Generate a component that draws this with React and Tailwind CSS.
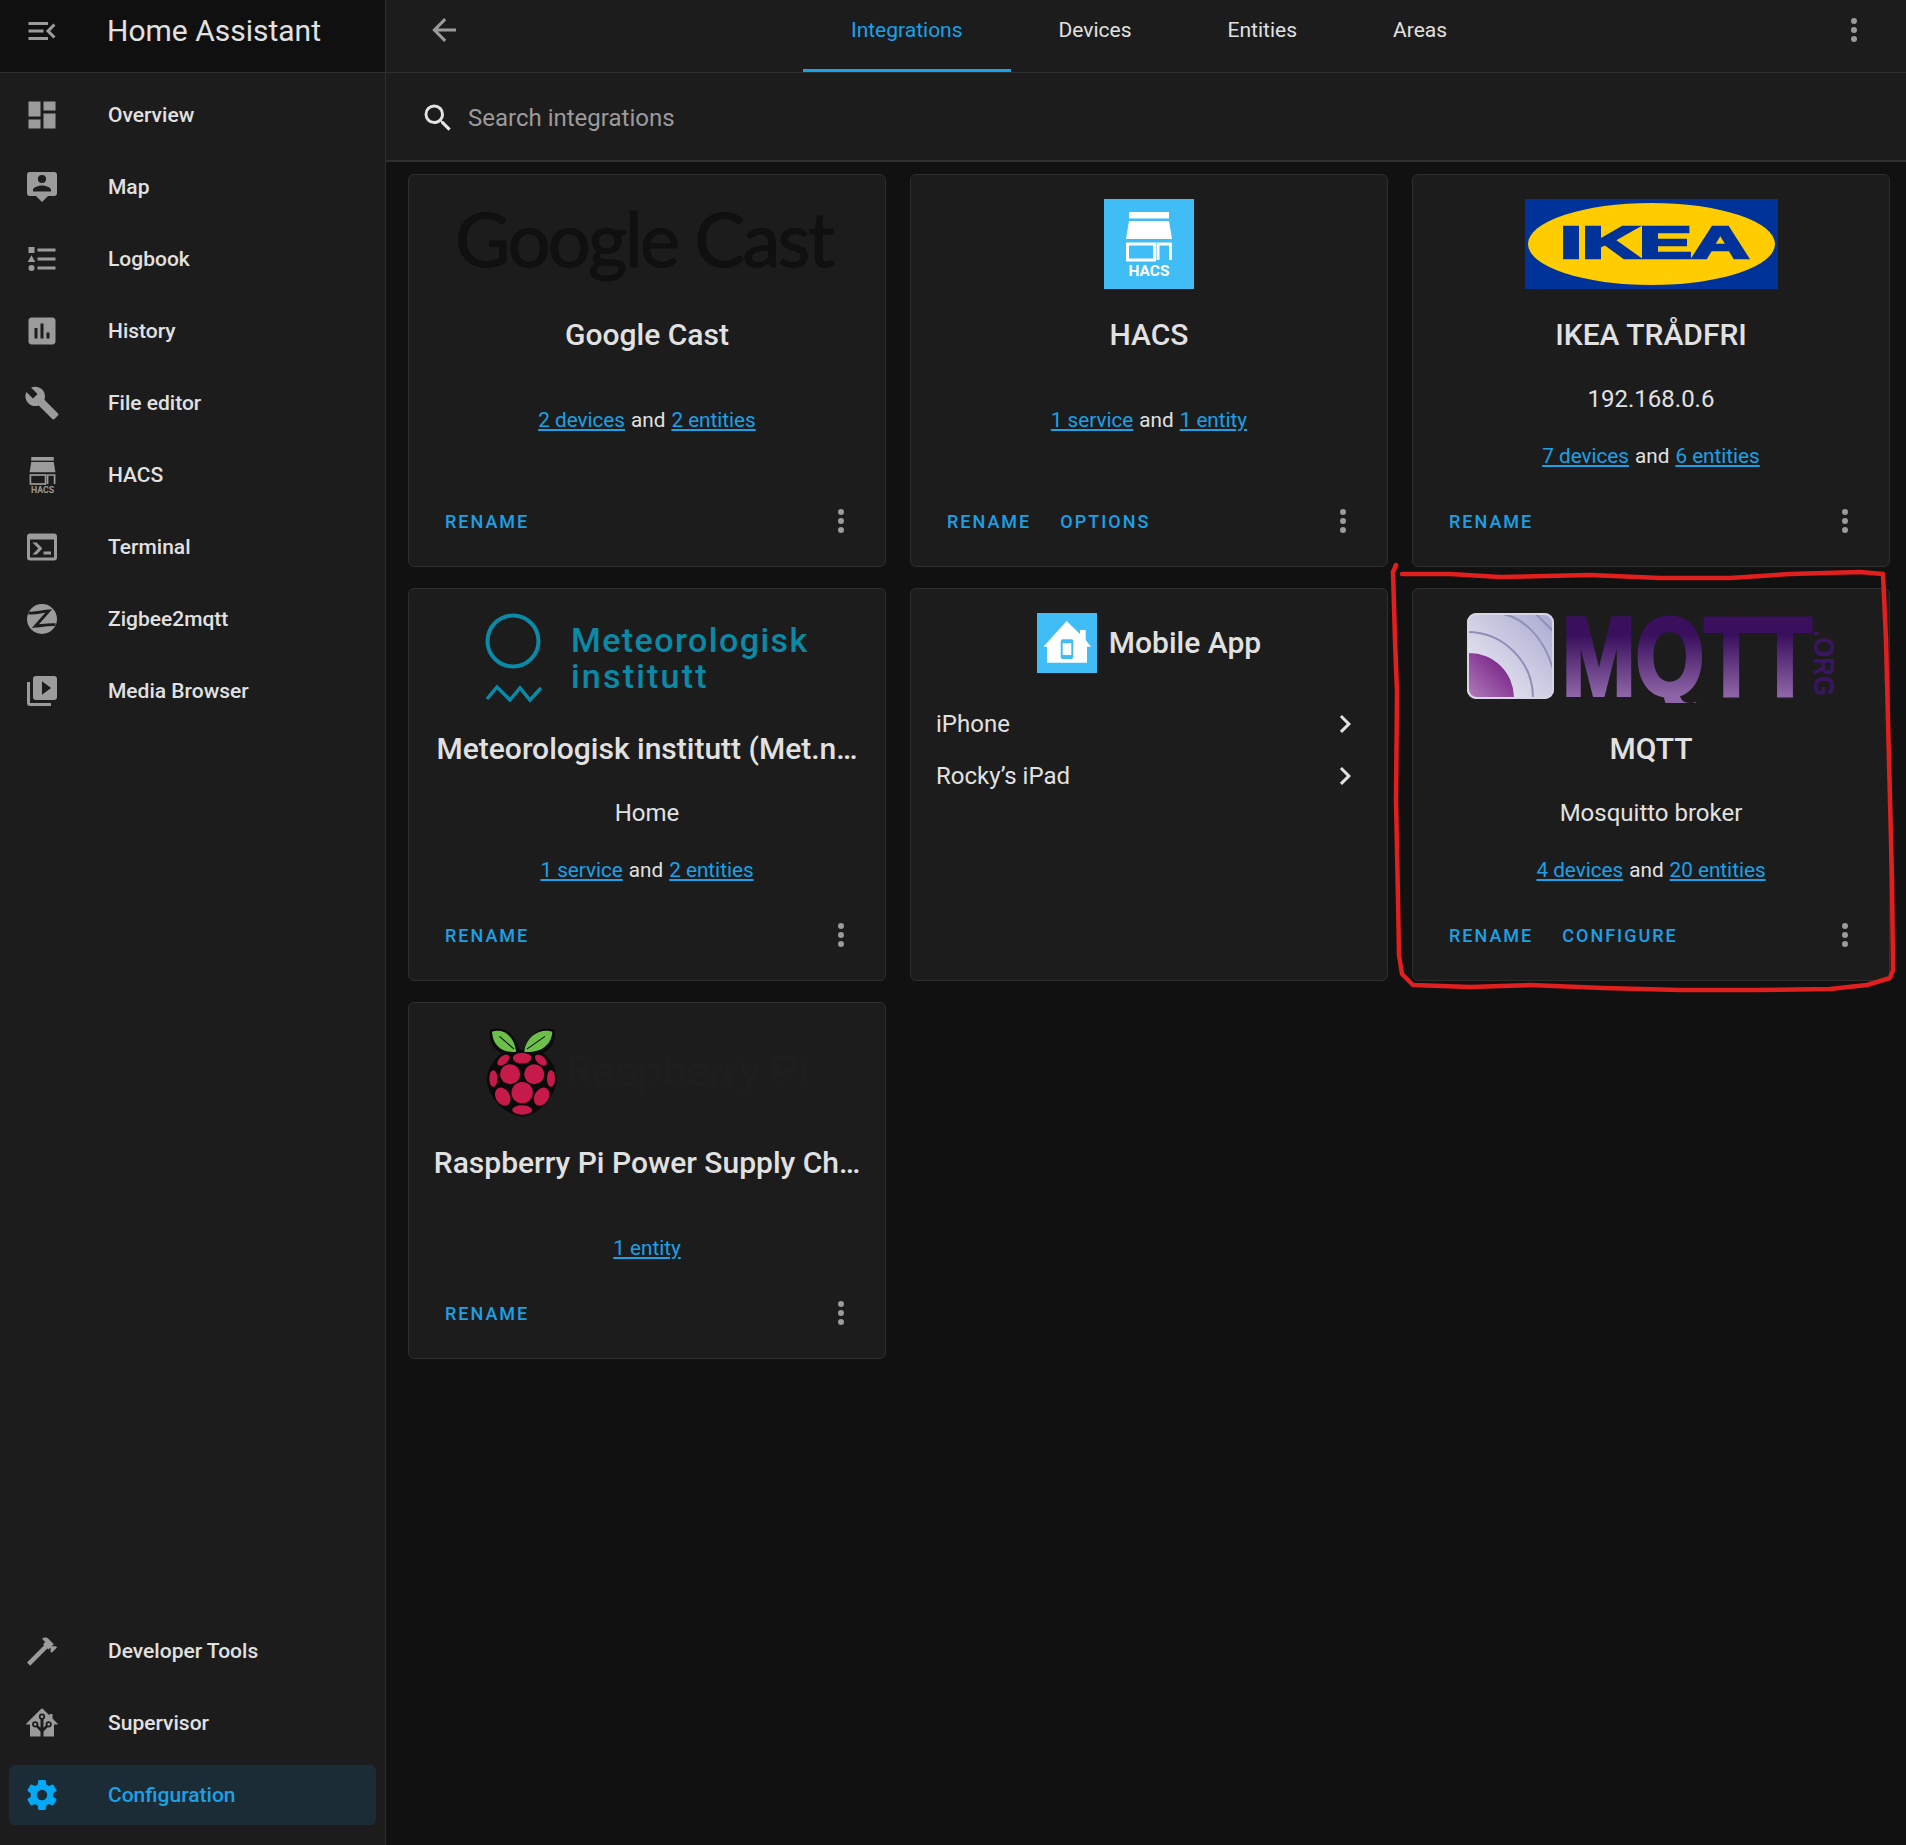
import React from 'react';

const mdi = {
  menuOpen: 'M21,15.61L19.59,17L14.58,12L19.59,7L21,8.39L17.44,12L21,15.61M3,6H16V8H3V6M3,13V11H13V13H3M3,18V16H16V18H3Z',
  dashboard: 'M13,3V9H21V3M13,21H21V11H13M3,21H11V15H3M3,13H11V3H3V13Z',
  map: 'M4,2H20A2,2 0 0,1 22,4V16A2,2 0 0,1 20,18H16L12,22L8,18H4A2,2 0 0,1 2,16V4A2,2 0 0,1 4,2M12,4A2.7,2.7 0 0,0 9.3,6.7A2.7,2.7 0 0,0 12,9.4A2.7,2.7 0 0,0 14.7,6.7A2.7,2.7 0 0,0 12,4M6,15H18V14C18,12 14,11 12,11C10,11 6,12 6,14V15Z',
  logbook: 'M5,9.5L7.5,14H2.5L5,9.5M3,4H7V8H3V4M5,20A2,2 0 0,0 7,18A2,2 0 0,0 5,16A2,2 0 0,0 3,18A2,2 0 0,0 5,20M9,5V7H21V5H9M9,19H21V17H9V19M9,13H21V11H9V13Z',
  history: 'M19 3H5C3.9 3 3 3.9 3 5V19C3 20.1 3.9 21 5 21H19C20.1 21 21 20.1 21 19V5C21 3.9 20.1 3 19 3M9 17H7V10H9V17M13 17H11V7H13V17M17 17H15V13H17V17Z',
  wrench: 'M22.7,19L13.6,9.9C14.5,7.6 14,4.9 12.1,3C10.1,1 7.1,0.6 4.7,1.7L9,6L6,9L1.6,4.7C0.4,7.1 0.9,10.1 2.9,12.1C4.8,14 7.5,14.5 9.8,13.6L18.9,22.7C19.3,23.1 19.9,23.1 20.3,22.7L22.6,20.4C23.1,20 23.1,19.3 22.7,19Z',
  console: 'M20,19V7H4V19H20M20,3A2,2 0 0,1 22,5V19A2,2 0 0,1 20,21H4A2,2 0 0,1 2,19V5C2,3.89 2.9,3 4,3H20M13,17V15H18V17H13M9.58,13L5.57,9H8.4L11.7,12.3C12.09,12.69 12.09,13.33 11.7,13.72L8.42,17H5.59L9.58,13Z',
  media: 'M4,6H2V20A2,2 0 0,0 4,22H18V20H4V6M20,2H8A2,2 0 0,0 6,4V16A2,2 0 0,0 8,18H20A2,2 0 0,0 22,16V4A2,2 0 0,0 20,2M12,14.5V5.5L18,10L12,14.5Z',
  hammer: 'M2 19.63L13.43 8.2L12.72 7.5L14.14 6.07L12 3.89C13.2 2.7 15.09 2.7 16.27 3.89L19.87 7.5L18.45 8.91H21.29L22 9.62L18.45 13.21L17.74 12.5V9.62L16.27 11.04L15.56 10.33L4.13 21.76L2 19.63Z',
  supervisor: 'M21.8,13H20V21H13V17.67L15.79,14.88L16.5,15C17.66,15 18.6,14.06 18.6,12.9C18.6,11.74 17.66,10.8 16.5,10.8A2.1,2.1 0 0,0 14.4,12.9L14.5,13.61L13,15.13V9.65C13.66,9.29 14.1,8.6 14.1,7.8A2.1,2.1 0 0,0 12,5.7A2.1,2.1 0 0,0 9.9,7.8C9.9,8.6 10.34,9.29 11,9.65V15.13L9.5,13.61L9.6,12.9A2.1,2.1 0 0,0 7.5,10.8A2.1,2.1 0 0,0 5.4,12.9A2.1,2.1 0 0,0 7.5,15L8.21,14.88L11,17.67V21H4V13H2.25C1.83,13 1.42,13 1.42,12.79C1.43,12.57 1.85,12.15 2.28,11.72L11,3C11.33,2.67 11.67,2.33 12,2.33C12.33,2.33 12.67,2.67 13,3L17,7V6H19V9L21.78,11.78C22.18,12.18 22.59,12.59 22.6,12.8C22.6,13 22.2,13 21.8,13M7.5,12A0.9,0.9 0 0,1 8.4,12.9A0.9,0.9 0 0,1 7.5,13.8A0.9,0.9 0 0,1 6.6,12.9A0.9,0.9 0 0,1 7.5,12M16.5,12C17,12 17.4,12.4 17.4,12.9C17.4,13.4 17,13.8 16.5,13.8A0.9,0.9 0 0,1 15.6,12.9A0.9,0.9 0 0,1 16.5,12M12,6.9C12.5,6.9 12.9,7.3 12.9,7.8C12.9,8.3 12.5,8.7 12,8.7C11.5,8.7 11.1,8.3 11.1,7.8C11.1,7.3 11.5,6.9 12,6.9Z',
  cog: 'M12,15.5A3.5,3.5 0 0,1 8.5,12A3.5,3.5 0 0,1 12,8.5A3.5,3.5 0 0,1 15.5,12A3.5,3.5 0 0,1 12,15.5M19.43,12.97C19.47,12.65 19.5,12.33 19.5,12C19.5,11.67 19.47,11.34 19.43,11L21.54,9.37C21.73,9.22 21.78,8.95 21.66,8.73L19.66,5.27C19.54,5.05 19.27,4.96 19.05,5.05L16.56,6.05C16.04,5.66 15.5,5.32 14.87,5.07L14.5,2.42C14.46,2.18 14.25,2 14,2H10C9.75,2 9.54,2.18 9.5,2.42L9.13,5.07C8.5,5.32 7.96,5.66 7.44,6.05L4.95,5.05C4.73,4.96 4.46,5.05 4.34,5.27L2.34,8.73C2.21,8.95 2.27,9.22 2.46,9.37L4.57,11C4.53,11.34 4.5,11.67 4.5,12C4.5,12.33 4.53,12.65 4.57,12.97L2.46,14.63C2.27,14.78 2.21,15.05 2.34,15.27L4.34,18.73C4.46,18.95 4.73,19.03 4.95,18.95L7.44,17.94C7.96,18.34 8.5,18.68 9.13,18.93L9.5,21.58C9.54,21.82 9.75,22 10,22H14C14.25,22 14.46,21.82 14.5,21.58L14.87,18.93C15.5,18.67 16.04,18.34 16.56,17.94L19.05,18.95C19.27,19.03 19.54,18.95 19.66,18.73L21.66,15.27C21.78,15.05 21.73,14.78 21.54,14.63L19.43,12.97Z',
  back: 'M20,11V13H8L13.5,18.5L12.08,19.92L4.16,12L12.08,4.08L13.5,5.5L8,11H20Z',
  search: 'M9.5,3A6.5,6.5 0 0,1 16,9.5C16,11.11 15.41,12.59 14.44,13.73L14.71,14H15.5L20.5,19L19,20.5L14,15.5V14.71L13.73,14.44C12.59,15.41 11.11,16 9.5,16A6.5,6.5 0 0,1 3,9.5A6.5,6.5 0 0,1 9.5,3M9.5,5C7,5 5,7 5,9.5C5,12 7,14 9.5,14C12,14 14,12 14,9.5C14,7 12,5 9.5,5Z',
  dots: 'M12,16A2,2 0 0,1 14,18A2,2 0 0,1 12,20A2,2 0 0,1 10,18A2,2 0 0,1 12,16M12,10A2,2 0 0,1 14,12A2,2 0 0,1 12,14A2,2 0 0,1 10,12A2,2 0 0,1 12,10M12,4A2,2 0 0,1 14,6A2,2 0 0,1 12,8A2,2 0 0,1 10,6A2,2 0 0,1 12,4Z',
  chevron: 'M8.59,16.58L13.17,12L8.59,7.41L10,6L16,12L10,18L8.59,16.58Z',
};

const Icon = ({ d, className = 'w-9 h-9 fill-[#9b9b9b]' }) => (
  <svg viewBox="0 0 24 24" className={`shrink-0 ${className}`} fillRule="evenodd">
    <path d={d} />
  </svg>
);

const HacsGlyph = ({ className, color }) => (
  <svg viewBox="0 0 46 64" className={`overflow-visible ${className}`}>
    <rect x="3" y="0" width="40" height="6.5" fill={color} />
    <path d="M3,9 H43 L46,27 H0 Z" fill={color} />
    <rect x="1.5" y="32" width="27" height="16" fill="none" stroke={color} strokeWidth="3" />
    <path d="M32,48 V32 H44.5 V48" fill="none" stroke={color} strokeWidth="3" />
    <text x="23" y="64" textAnchor="middle" fontSize="15.5" fontWeight="700" fill={color} fontFamily="Roboto, sans-serif">HACS</text>
  </svg>
);

const ZigbeeIcon = () => (
  <svg viewBox="0 0 24 24" className="w-9 h-9 shrink-0">
    <circle cx="12" cy="12" r="10" fill="#9b9b9b" />
    <path d="M3,8 C8,8.5 12,7 16.5,6.6 L7.5,16.8 C12,16.4 16,15.4 21,15.8" fill="none" stroke="#1c1c1c" strokeWidth="1.9" />
  </svg>
);

const topItems = [
  ['Overview', <Icon d={mdi.dashboard} />],
  ['Map', <Icon d={mdi.map} />],
  ['Logbook', <Icon d={mdi.logbook} />],
  ['History', <Icon d={mdi.history} />],
  ['File editor', <Icon d={mdi.wrench} />],
  ['HACS', <div className="w-9 h-9 shrink-0 flex items-center justify-center"><HacsGlyph className="w-[27px] h-[36px]" color="#9b9b9b" /></div>],
  ['Terminal', <Icon d={mdi.console} />],
  ['Zigbee2mqtt', <ZigbeeIcon />],
  ['Media Browser', <Icon d={mdi.media} />],
];

const NavItem = ({ label, icon, active }) => (
  <div className={`mx-[9px] h-[60px] rounded-md flex items-center pl-[15px] gap-12 ${active ? 'bg-[#1b2c36]' : ''}`}>
    {icon}
    <span className={`pt-[2px] text-[21px] font-medium ${active ? 'text-[#1ba1e8]' : 'text-[#e1e1e1]'}`}>{label}</span>
  </div>
);

const Sidebar = () => (
  <aside className="w-[386px] shrink-0 bg-[#1c1c1c] border-r border-[#2f2f2f] flex flex-col h-full">
    <div className="h-[73px] shrink-0 bg-[#101010] border-b border-[#2f2f2f] flex items-center pl-6 gap-[47px] pb-[11px]">
      <Icon d={mdi.menuOpen} />
      <span className="text-[30px] text-[#e1e1e1] leading-none">Home Assistant</span>
    </div>
    <div className="flex flex-col gap-3 pt-[12px]">
      {topItems.map(([label, icon]) => (
        <NavItem key={label} label={label} icon={icon} />
      ))}
    </div>
    <div className="mt-auto flex flex-col gap-3 pb-5">
      <NavItem label="Developer Tools" icon={<Icon d={mdi.hammer} />} />
      <NavItem label="Supervisor" icon={<Icon d={mdi.supervisor} />} />
      <NavItem label="Configuration" active icon={<Icon d={mdi.cog} className="w-9 h-9 fill-[#03a9f4]" />} />
    </div>
  </aside>
);

const TopBar = () => (
  <div className="bg-[#1c1c1c] shrink-0">
    <div className="h-[73px] border-b border-[#2f2f2f] flex">
      <div className="w-[76px] flex items-start pl-[40px] pt-[12px]">
        <Icon d={mdi.back} />
      </div>
      <div className="flex-1 flex justify-center">
        {['Integrations', 'Devices', 'Entities', 'Areas'].map((tab, i) => (
          <div
            key={tab}
            className={`h-[72px] px-12 pb-[8px] flex items-center text-[21px] border-b-[3px] ${i === 0 ? 'text-[#1ba1e8] border-[#1ba1e8]' : 'text-[#e1e1e1] border-transparent'}`}
          >
            {tab}
          </div>
        ))}
      </div>
      <div className="w-[70px] flex items-start pt-[12px]">
        <Icon d={mdi.dots} />
      </div>
    </div>
    <div className="h-[89px] border-b-2 border-[#2f2f2f] flex items-center pl-[34px] gap-[12px] pt-[3px]">
      <Icon d={mdi.search} className="w-9 h-9 fill-[#e1e1e1]" />
      <span className="text-[24px] text-[#9b9b9b]">Search integrations</span>
    </div>
  </div>
);

const GoogleCastLogo = () => (
  <svg width="400" height="90" viewBox="0 0 400 90" className="overflow-visible">
    <text x="198" y="68" textAnchor="middle" fontSize="76" fontFamily="Lato, sans-serif" fill="#101010" stroke="#101010" strokeWidth="1" textLength="380" lengthAdjust="spacing">Google Cast</text>
  </svg>
);

const HacsLogo = () => (
  <div className="w-[90px] h-[90px] bg-[#41bdf5] flex items-center justify-center">
    <HacsGlyph className="w-[46px] h-[64px]" color="#ffffff" />
  </div>
);

const IkeaLogo = () => (
  <svg width="253" height="90" viewBox="0 0 253 90" className="overflow-visible">
    <rect width="253" height="90" fill="#003399" />
    <ellipse cx="126.5" cy="45" rx="123.5" ry="41" fill="#ffcc00" />
    <text x="129.5" y="59" textAnchor="middle" fontSize="45" fontWeight="700" fontFamily="Liberation Sans, sans-serif" fill="#003399" stroke="#003399" strokeWidth="2.6" textLength="189" lengthAdjust="spacingAndGlyphs">IKEA</text>
  </svg>
);

const MetLogo = () => (
  <svg width="340" height="90" viewBox="0 0 340 90" className="overflow-visible">
    <circle cx="36" cy="28" r="25.5" fill="none" stroke="#0a8aa6" strokeWidth="4" />
    <path d="M10,86 L20,74 L33,87 L43,75 L53,87 L64,75" fill="none" stroke="#0a8aa6" strokeWidth="3.5" />
    <text x="94" y="39" fontSize="34" fontWeight="500" fontFamily="Roboto, sans-serif" fill="#0a8aa6" letterSpacing="1.45">Meteorologisk</text>
    <text x="94" y="75" fontSize="34" fontWeight="500" fontFamily="Roboto, sans-serif" fill="#0a8aa6" letterSpacing="2.2">institutt</text>
  </svg>
);

const MqttLogo = () => (
  <svg width="369" height="90" viewBox="0 0 369 90" className="overflow-visible">
    <defs>
      <linearGradient id="mqttText" gradientUnits="userSpaceOnUse" x1="0" y1="2" x2="0" y2="82">
        <stop offset="0%" stopColor="#3a0f5e" />
        <stop offset="25%" stopColor="#3a0f5e" />
        <stop offset="100%" stopColor="#8d64a5" />
      </linearGradient>
      <linearGradient id="mqttBox" x1="1" y1="0" x2="0" y2="1">
        <stop offset="0%" stopColor="#a9a9d0" />
        <stop offset="100%" stopColor="#f3f2f7" />
      </linearGradient>
      <linearGradient id="mqttCore" x1="1" y1="0" x2="0" y2="1">
        <stop offset="0%" stopColor="#6a0f7c" />
        <stop offset="100%" stopColor="#b07ab8" />
      </linearGradient>
      <clipPath id="mqttClip">
        <rect x="0" y="0" width="87" height="86" rx="9" />
      </clipPath>
      <clipPath id="mqttTail">
        <rect x="90" y="-5" width="260" height="95" />
      </clipPath>
    </defs>
    <g clipPath="url(#mqttClip)">
      <rect width="87" height="86" fill="url(#mqttBox)" />
      <path d="M2,40 A45,45 0 0,1 47,84 L2,84 Z" fill="url(#mqttCore)" />
      <path d="M0,19 A66,66 0 0,1 66,86" fill="none" stroke="#8f8fb8" strokeWidth="2" />
      <path d="M24,0 A64,88 0 0,1 87,60" fill="none" stroke="#8f8fb8" strokeWidth="2" />
      <path d="M68,0 L87,19" fill="none" stroke="#8f8fb8" strokeWidth="2" />
    </g>
    <rect x="1" y="1" width="85" height="84" rx="9" fill="none" stroke="#d8d6e4" strokeWidth="2" />
    <g clipPath="url(#mqttTail)">
      <text x="95" y="82" fontSize="112" fontWeight="700" fontFamily="Liberation Sans, sans-serif" fill="url(#mqttText)" stroke="url(#mqttText)" strokeWidth="4" textLength="250" lengthAdjust="spacingAndGlyphs">MQTT</text>
    </g>
    <text x="0" y="0" transform="translate(347,17) rotate(90)" fontSize="29" fontWeight="700" fontFamily="Liberation Sans, sans-serif" fill="#3a1560" textLength="66" lengthAdjust="spacingAndGlyphs">.ORG</text>
  </svg>
);

const RaspberryLogo = () => (
  <svg width="322" height="90" viewBox="0 0 322 90" className="overflow-visible">
    <svg x="0" y="0" width="71" height="90" viewBox="228 85 212 267">
      <path d="M240,92 C270,82 305,90 325,145 C330,155 342,155 347,145 C367,90 402,82 433,92 C436,125 425,150 398,162 C428,185 446,225 438,255 C425,305 385,345 336,352 C285,345 245,305 232,255 C225,225 245,185 275,162 C248,150 236,125 240,92 Z" fill="#0a0a0a" />
      <path d="M246,98 C280,88 312,110 318,158 C280,162 248,142 246,98 Z" fill="#6cc04a" />
      <path d="M426,98 C392,88 348,110 342,158 C385,162 424,142 426,98 Z" fill="#6cc04a" />
      <path d="M268,112 L312,150 M404,112 L350,150" stroke="#0a0a0a" strokeWidth="3" />
      <g fill="#c51a4a">
        <ellipse cx="336" cy="177" rx="28" ry="16" />
        <circle cx="300" cy="225" r="30" />
        <circle cx="372" cy="225" r="30" />
        <circle cx="336" cy="280" r="32" />
        <ellipse cx="250" cy="238" rx="12" ry="25" />
        <ellipse cx="422" cy="238" rx="12" ry="25" />
        <ellipse cx="278" cy="292" rx="21" ry="29" transform="rotate(-30 278 292)" />
        <ellipse cx="394" cy="292" rx="21" ry="29" transform="rotate(30 394 292)" />
        <ellipse cx="336" cy="332" rx="30" ry="14" />
        <ellipse cx="280" cy="183" rx="21" ry="12" transform="rotate(-40 280 183)" />
        <ellipse cx="392" cy="183" rx="21" ry="12" transform="rotate(40 392 183)" />
      </g>
    </svg>
    <text x="79" y="58" fontSize="40" fontFamily="Roboto, sans-serif" fill="#1e1e1e" textLength="243" lengthAdjust="spacingAndGlyphs">Raspberry Pi</text>
  </svg>
);

const MobileIcon = () => (
  <svg width="60" height="60" viewBox="0 0 60 60" className="shrink-0">
    <rect width="60" height="60" fill="#41bdf5" />
    <path d="M29.7,8 L43,21 V17 H48.7 V27 L54,33.7 H50 V49.7 H10 V33.7 H6.3 Z" fill="#ffffff" />
    <rect x="23.7" y="26.3" width="12.6" height="19.7" rx="2" fill="#41bdf5" />
    <rect x="25.7" y="30.3" width="8.6" height="11.7" fill="#ffffff" />
  </svg>
);

const A = ({ children }) => <span className="text-[#1ba1e8] underline underline-offset-2">{children}</span>;

const Links = ({ a, b, className = '' }) => (
  <div className={`text-[20.7px] leading-none text-[#e1e1e1] text-center ${className}`}>
    {b ? (
      <>
        <A>{a}</A> and <A>{b}</A>
      </>
    ) : (
      <A>{a}</A>
    )}
  </div>
);

const Card = ({ logo, title, subtitle, a, b, actions }) => (
  <div className="bg-[#1c1c1c] border border-[#2e2e2e] rounded-md flex flex-col">
    <div className="pt-[24px] h-[137px] flex justify-center">{logo}</div>
    <div className="h-[44px] flex items-center justify-center text-[30px] font-medium text-[#e1e1e1] whitespace-nowrap">
      {title}
    </div>
    {subtitle ? (
      <>
        <div className="mt-[31px] h-[24px] flex items-center justify-center text-[24px] leading-none text-[#e1e1e1]">{subtitle}</div>
        <Links a={a} b={b} className="mt-[33px] h-[24px] flex items-center justify-center gap-[6px]" />
      </>
    ) : (
      <Links a={a} b={b} className="mt-[52px] h-[24px] flex items-center justify-center gap-[6px]" />
    )}
    <div className="mt-auto h-[90px] flex items-center pl-[36px] pr-[26px]">
      <div className="flex gap-[29px] text-[18px] font-medium tracking-[2px] text-[#1ba1e8]">
        {actions.map((x) => (
          <span key={x}>{x}</span>
        ))}
      </div>
      <Icon d={mdi.dots} className="w-9 h-9 fill-[#9b9b9b] ml-auto" />
    </div>
  </div>
);

const MobileCard = () => (
  <div className="bg-[#1c1c1c] border border-[#2e2e2e] rounded-md flex flex-col">
    <div className="pt-[24px] flex justify-center items-center gap-3">
      <MobileIcon />
      <span className="text-[30px] font-medium text-[#e1e1e1] pb-[2px]">Mobile App</span>
    </div>
    <div className="mt-[33px] flex flex-col gap-[17px] pl-[25px] pr-[24px] text-[24px] text-[#e1e1e1]">
      {["iPhone", "Rocky’s iPad"].map((name) => (
        <div key={name} className="flex items-center justify-between h-[35px]">
          <span>{name}</span>
          <Icon d={mdi.chevron} className="w-9 h-9 fill-[#e1e1e1]" />
        </div>
      ))}
    </div>
  </div>
);

const Annotation = () => (
  <svg className="absolute inset-0 pointer-events-none" width="1906" height="1845" viewBox="0 0 1906 1845">
    <path
      d="M1396,565 L1393,572 L1395,640 L1397,693 L1396,800 L1398,900 L1399,955 L1402,974 L1413,985 L1470,987 L1530,985 L1603,988 L1680,990 L1757,990 L1830,989 L1867,985 L1890,978 L1893,970 L1892,880 L1890,800 L1888,720 L1886,640 L1883,574 L1860,572 L1790,574 L1730,578 L1660,578 L1590,575 L1500,577 L1450,574 L1402,574"
      fill="none"
      stroke="#e21f1f"
      strokeWidth="4.5"
      strokeLinejoin="round"
      strokeLinecap="round"
    />
  </svg>
);

export default function App() {
  return (
    <div className="relative w-[1906px] h-[1845px] overflow-hidden bg-[#111111] flex [font-family:Roboto,sans-serif]">
      <Sidebar />
      <main className="flex-1 flex flex-col min-w-0">
        <TopBar />
        <div className="pl-[22px] pr-[16px] pt-[12px] grid grid-cols-3 gap-x-6 gap-y-[21px] grid-rows-[393px_393px_357px]">
          <Card logo={<GoogleCastLogo />} title="Google Cast" a="2 devices" b="2 entities" actions={['RENAME']} />
          <Card logo={<HacsLogo />} title="HACS" a="1 service" b="1 entity" actions={['RENAME', 'OPTIONS']} />
          <Card logo={<IkeaLogo />} title="IKEA TRÅDFRI" subtitle="192.168.0.6" a="7 devices" b="6 entities" actions={['RENAME']} />
          <Card logo={<MetLogo />} title="Meteorologisk institutt (Met.n…" subtitle="Home" a="1 service" b="2 entities" actions={['RENAME']} />
          <MobileCard />
          <Card logo={<MqttLogo />} title="MQTT" subtitle="Mosquitto broker" a="4 devices" b="20 entities" actions={['RENAME', 'CONFIGURE']} />
          <Card logo={<RaspberryLogo />} title="Raspberry Pi Power Supply Ch…" a="1 entity" actions={['RENAME']} />
        </div>
      </main>
      <Annotation />
    </div>
  );
}
